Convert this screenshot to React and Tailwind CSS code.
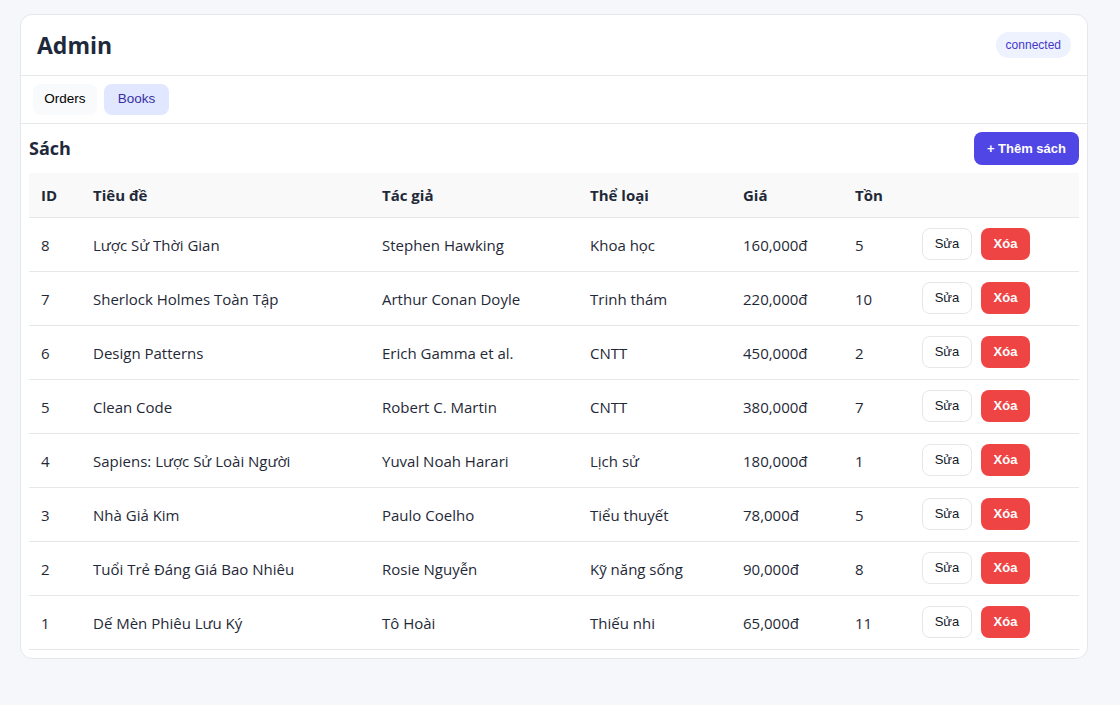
import { useState } from "react";

const books = [
  { id: 8, title: "Lược Sử Thời Gian", author: "Stephen Hawking", genre: "Khoa học", price: "160,000đ", stock: 5 },
  { id: 7, title: "Sherlock Holmes Toàn Tập", author: "Arthur Conan Doyle", genre: "Trinh thám", price: "220,000đ", stock: 10 },
  { id: 6, title: "Design Patterns", author: "Erich Gamma et al.", genre: "CNTT", price: "450,000đ", stock: 2 },
  { id: 5, title: "Clean Code", author: "Robert C. Martin", genre: "CNTT", price: "380,000đ", stock: 7 },
  { id: 4, title: "Sapiens: Lược Sử Loài Người", author: "Yuval Noah Harari", genre: "Lịch sử", price: "180,000đ", stock: 1 },
  { id: 3, title: "Nhà Giả Kim", author: "Paulo Coelho", genre: "Tiểu thuyết", price: "78,000đ", stock: 5 },
  { id: 2, title: "Tuổi Trẻ Đáng Giá Bao Nhiêu", author: "Rosie Nguyễn", genre: "Kỹ năng sống", price: "90,000đ", stock: 8 },
  { id: 1, title: "Dế Mèn Phiêu Lưu Ký", author: "Tô Hoài", genre: "Thiếu nhi", price: "65,000đ", stock: 11 },
];

export default function App() {
  const [tab, setTab] = useState("books");

  return (
    <div className="min-h-screen w-full bg-[#f6f7fb] px-5 pt-[14px] font-['Open_Sans',sans-serif] text-[#1f2937]">
      <div className="w-[1068px] rounded-xl border border-[#e5e7eb] bg-white">
        {/* header */}
        <div className="flex h-[61px] items-center justify-between border-b border-[#e5e7eb] pl-4 pr-4">
          <h1 className="text-[23px] font-bold text-[#1e293b]">Admin</h1>
          <span className="rounded-full bg-[#eef2ff] px-[10px] py-[6px] font-['Liberation_Sans',sans-serif] text-[12px] leading-[14px] text-[#4338ca]">
            connected
          </span>
        </div>

        {/* tabs */}
        <div className="flex h-[48px] items-center gap-[7px] border-b border-[#e5e7eb] px-3">
          <button
            onClick={() => setTab("orders")}
            className={`h-[31px] w-[64px] rounded-lg font-['Liberation_Sans',sans-serif] text-[13.5px] ${tab === "orders" ? "bg-[#e0e7ff] text-[#3730a3]" : "bg-[#f8fafc] text-black"}`}
          >
            Orders
          </button>
          <button
            onClick={() => setTab("books")}
            className={`h-[31px] w-[65px] rounded-lg font-['Liberation_Sans',sans-serif] text-[13.5px] ${tab === "books" ? "bg-[#e0e7ff] text-[#3730a3]" : "bg-[#f8fafc] text-black"}`}
          >
            Books
          </button>
        </div>

        {/* content */}
        <div className="px-2 pt-2 pb-2">
          <div className="flex items-center justify-between">
            <h2 className="text-[18px] font-bold text-[#1e293b]">Sách</h2>
            <button className="h-[33px] rounded-lg bg-[#4f46e5] px-[13px] font-['Liberation_Sans',sans-serif] text-[13px] font-bold text-white">
              + Thêm sách
            </button>
          </div>

          <table className="mt-2 w-full table-fixed border-collapse text-[15px]">
            <colgroup>
              <col className="w-[52px]" />
              <col className="w-[289px]" />
              <col className="w-[208px]" />
              <col className="w-[153px]" />
              <col className="w-[112px]" />
              <col className="w-[67px]" />
              <col />
            </colgroup>
            <thead>
              <tr className="h-[44px] border-b border-[#e5e7eb] bg-[#f9f9f9] text-left">
                <th className="px-3 font-bold">ID</th>
                <th className="px-3 font-bold">Tiêu đề</th>
                <th className="px-3 font-bold">Tác giả</th>
                <th className="px-3 font-bold">Thể loại</th>
                <th className="px-3 font-bold">Giá</th>
                <th className="px-3 font-bold">Tồn</th>
                <th className="px-3"></th>
              </tr>
            </thead>
            <tbody>
              {books.map((b) => (
                <tr key={b.id} className="h-[54px] border-b border-[#e5e7eb]">
                  <td className="px-3 pt-[2px]">{b.id}</td>
                  <td className="px-3 pt-[2px]">{b.title}</td>
                  <td className="px-3 pt-[2px]">{b.author}</td>
                  <td className="px-3 pt-[2px]">{b.genre}</td>
                  <td className="px-3 pt-[2px]">{b.price}</td>
                  <td className="px-3 pt-[2px]">{b.stock}</td>
                  <td className="px-3">
                    <div className="flex gap-[9px]">
                      <button className="h-[32px] w-[50px] rounded-lg border border-[#e5e7eb] bg-white font-['Liberation_Sans',sans-serif] text-[13px] text-[#111827]">
                        Sửa
                      </button>
                      <button className="h-[32px] w-[49px] rounded-lg bg-[#ef4444] font-['Liberation_Sans',sans-serif] text-[13px] font-semibold text-white">
                        Xóa
                      </button>
                    </div>
                  </td>
                </tr>
              ))}
            </tbody>
          </table>
        </div>
      </div>
    </div>
  );
}
